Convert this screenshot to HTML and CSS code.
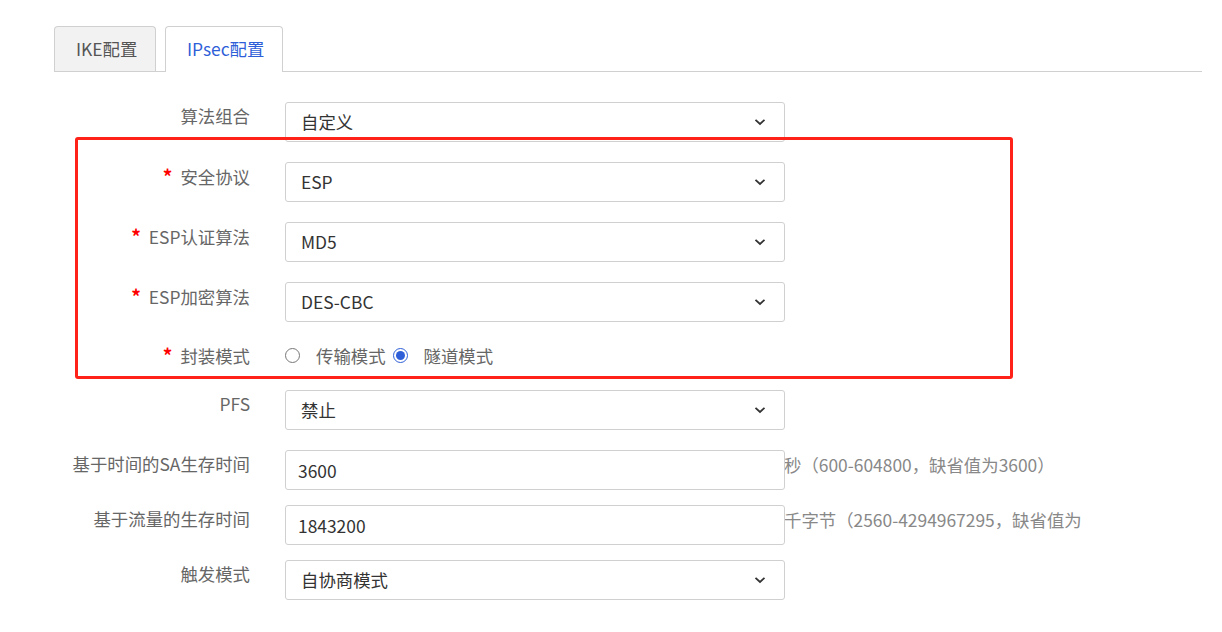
FILE: index.html
```html
<!DOCTYPE html>
<html lang="zh-CN">
<head>
  <meta charset="UTF-8" />
  <title>IPsec配置</title>
  <link rel="stylesheet" href="styles.css">
</head>
<body>
  <div class="page">
    <div class="tabs">
      <div class="tab">IKE配置</div>
      <div class="tab active">IPsec配置</div>
    </div>

    <div class="form">
      <div class="row">
        <div class="label">算法组合</div>
        <div class="select">自定义<svg class="arrow" width="12" height="8" viewBox="0 0 12 8"><path d="M1.5 1.8 6 6 10.5 1.8" fill="none" stroke="#333" stroke-width="1.8"/></svg></div>
      </div>
      <div class="row">
        <div class="label"><span class="req">*</span>安全协议</div>
        <div class="select">ESP<svg class="arrow" width="12" height="8" viewBox="0 0 12 8"><path d="M1.5 1.8 6 6 10.5 1.8" fill="none" stroke="#333" stroke-width="1.8"/></svg></div>
      </div>
      <div class="row">
        <div class="label"><span class="req">*</span>ESP认证算法</div>
        <div class="select">MD5<svg class="arrow" width="12" height="8" viewBox="0 0 12 8"><path d="M1.5 1.8 6 6 10.5 1.8" fill="none" stroke="#333" stroke-width="1.8"/></svg></div>
      </div>
      <div class="row">
        <div class="label"><span class="req">*</span>ESP加密算法</div>
        <div class="select">DES-CBC<svg class="arrow" width="12" height="8" viewBox="0 0 12 8"><path d="M1.5 1.8 6 6 10.5 1.8" fill="none" stroke="#333" stroke-width="1.8"/></svg></div>
      </div>
      <div class="row radio-row">
        <div class="label"><span class="req">*</span>封装模式</div>
        <div class="radios">
          <label class="option"><span class="radio"></span>传输模式</label>
          <label class="option"><span class="radio checked"></span>隧道模式</label>
        </div>
      </div>
      <div class="row">
        <div class="label">PFS</div>
        <div class="select">禁止<svg class="arrow" width="12" height="8" viewBox="0 0 12 8"><path d="M1.5 1.8 6 6 10.5 1.8" fill="none" stroke="#333" stroke-width="1.8"/></svg></div>
      </div>
      <div class="row">
        <div class="label">基于时间的SA生存时间</div>
        <input class="input" type="text" value="3600">
        <div class="hint">秒（600-604800，缺省值为3600）</div>
      </div>
      <div class="row tight">
        <div class="label">基于流量的生存时间</div>
        <input class="input" type="text" value="1843200">
        <div class="hint">千字节（2560-4294967295，缺省值为1843200）</div>
      </div>
      <div class="row tight">
        <div class="label">触发模式</div>
        <div class="select">自协商模式<svg class="arrow" width="12" height="8" viewBox="0 0 12 8"><path d="M1.5 1.8 6 6 10.5 1.8" fill="none" stroke="#333" stroke-width="1.8"/></svg></div>
      </div>
    </div>

    <!-- 标注框 -->
    <div class="mark"></div>
  </div>
</body>
</html>
```

FILE: styles.css
```css
body {
  margin: 0;
  font-family: "Noto Sans CJK SC", "Noto Sans", sans-serif;
  font-size: 17.4px;
  color: #333;
  background: #fff;
}

.page {
  position: relative;
  padding-top: 26px;
}

.tabs {
  display: flex;
  gap: 9px;
  margin-left: 54px;
  width: 1148px;
  border-bottom: 1px solid #d0d0d0;
}

.tab {
  box-sizing: border-box;
  width: 102px;
  height: 45px;
  line-height: 44px;
  padding-left: 21px;
  border: 1px solid #d0d0d0;
  border-bottom: none;
  border-radius: 4px 4px 0 0;
  background: #f2f2f2;
  color: #555;
  margin-bottom: -1px;
}

.tab.active {
  width: 118px;
  height: 46px;
  background: #fff;
  color: #2f5fd8;
}

.form {
  margin-top: 30px;
}

.row {
  display: flex;
  align-items: flex-start;
  margin-bottom: 20px;
}

.row.tight {
  margin-top: -5px;
}

.label {
  width: 250px;
  flex-shrink: 0;
  text-align: right;
  color: #666;
  line-height: 24px;
  padding-top: 2px;
  margin-right: 35px;
}

.req {
  color: #f00;
  font-weight: bold;
  font-size: 19px;
  margin-right: 8px;
}

.select, .input {
  position: relative;
  box-sizing: border-box;
  width: 500px;
  height: 40px;
  line-height: 38px;
  padding: 0 15px;
  border: 1px solid #d0d0d0;
  border-radius: 3px;
  font-family: inherit;
  font-size: 17.4px;
  color: #333;
  background: #fff;
  flex-shrink: 0;
}

.input {
  padding: 0 14px 0 12px;
}

.arrow {
  position: absolute;
  right: 18px;
  top: 15px;
}

.hint {
  width: 297px;
  overflow: hidden;
  white-space: nowrap;
  color: #888;
  line-height: 24px;
  padding-top: 3px;
  margin-left: -1px;
}

.radio-row {
  align-items: center;
  height: 29px;
  margin-top: -1px;
}

.radio-row .label {
  padding-top: 0;
}

.radios {
  display: flex;
  gap: 7px;
  color: #666;
}

.option {
  display: flex;
  align-items: center;
  gap: 16px;
}

.radio {
  width: 15px;
  height: 15px;
  border: 1px solid #777;
  border-radius: 50%;
  box-sizing: border-box;
  position: relative;
}

.radio.checked {
  border-color: #2f5fd8;
}

.radio.checked::after {
  content: "";
  position: absolute;
  left: 2px;
  top: 2px;
  width: 9px;
  height: 9px;
  border-radius: 50%;
  background: #2f5fd8;
}

.mark {
  position: absolute;
  left: 75px;
  top: 137px;
  width: 938px;
  height: 242px;
  box-sizing: border-box;
  border: 3px solid #ff2218;
  border-radius: 3px;
  pointer-events: none;
}
```
